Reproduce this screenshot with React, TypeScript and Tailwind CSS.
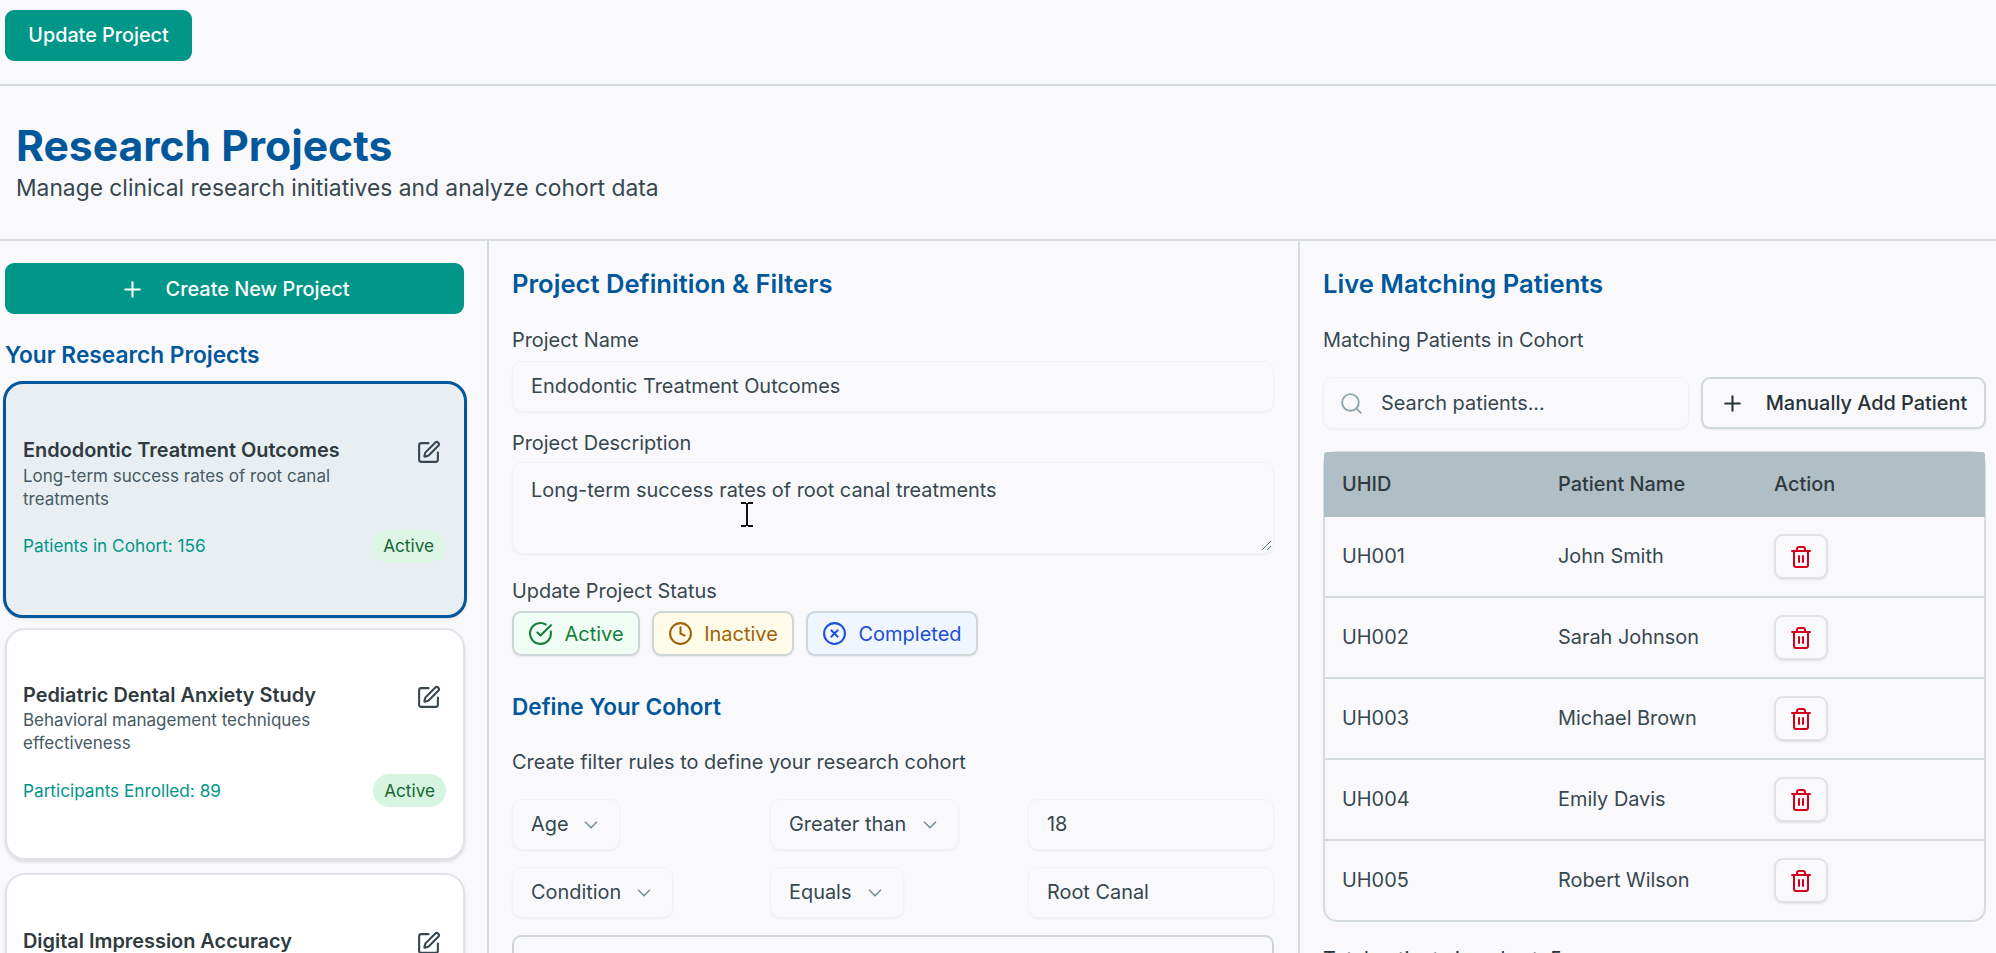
import { Plus, SquarePen, CircleCheckBig, Clock, CircleX, ChevronDown, Search, Trash2 } from "lucide-react";

const font = { fontFamily: "Inter, sans-serif" };

function Card({ active, title, desc, meta, last }: { active?: boolean; title: string; desc: string; meta: string; last?: boolean }) {
  return (
    <div className={active
      ? "rounded-[20px] border-[3px] border-[#01579b] bg-[#e8eff3] pt-[0.5px] pl-[17px] pr-[18px] h-[237px] -mx-[2px] mb-[10px] flex flex-col justify-center shadow-sm"
      : last
        ? "rounded-[20px] border-2 border-[#dfe3e8] bg-white pt-[0.5px] pl-[16px] pr-[17px] h-[258px] flex flex-col justify-center shadow-[0_2px_3px_rgba(0,0,0,0.12)] shrink-0"
        : "rounded-[20px] border-2 border-[#dfe3e8] bg-white pt-[0.5px] pl-[16px] pr-[17px] h-[232px] mb-[13px] flex flex-col justify-center shadow-[0_2px_3px_rgba(0,0,0,0.12)] shrink-0"}>
      <div className="flex justify-between items-start">
        <div className="w-[340px]">
          <div className="text-[19.9px] leading-[26px] font-semibold text-[#2f3a40]">{title}</div>
          <div className="text-[17px] leading-[23px] text-[#455a64] mt-[1.5px]">{desc}</div>
        </div>
        <SquarePen size={25} strokeWidth={2} className="text-[#37474f] mt-[3px] mr-[5px]" />
      </div>
      <div className="flex justify-between items-center mt-[19px]">
        <span className="text-[17.2px] text-[#009688]">{meta}</span>
        <span className={active
          ? "h-[33px] px-[12px] flex items-center rounded-full bg-[#dcf5e5] text-[#166534] text-[17.2px]"
          : "h-[33px] px-[11px] flex items-center rounded-full bg-[#d6f5e0] text-[#166534] text-[17.2px]"}>Active</span>
      </div>
    </div>
  );
}

function Sel({ label, w }: { label: string; w: string }) {
  return (
    <div className={`${w} h-[51px] rounded-[10px] border border-[#f1f2f5] shadow-[0_1px_2px_rgba(0,0,0,0.05)] pl-[18px] pr-[17px] flex items-center justify-between text-[19.9px] text-[#37474f]`}>
      <span>{label}</span>
      <ChevronDown size={22} strokeWidth={1.8} className="text-[#78909c]" />
    </div>
  );
}

function Val({ v }: { v: string }) {
  return (
    <div className="h-[51px] rounded-[10px] border border-[#f1f2f5] shadow-[0_1px_2px_rgba(0,0,0,0.05)] px-[18px] flex items-center text-[19.9px] text-[#37474f]">{v}</div>
  );
}

const patients = [["UH001", "John Smith"], ["UH002", "Sarah Johnson"], ["UH003", "Michael Brown"], ["UH004", "Emily Davis"], ["UH005", "Robert Wilson"]];

export default function App() {
  return (
    <div style={font} className="h-[953px] w-[1996px] overflow-hidden bg-[#f9f9fc] text-[#37474f] relative">
      <div className="h-[86px] pt-[10px] pl-[5px] border-b-2 border-[#d5dce0]">
        <button className="w-[187px] h-[51px] pt-[1px] rounded-[9px] bg-[#009688] text-white text-[19.8px] font-medium">Update Project</button>
      </div>
      <div className="h-[155px] border-b-2 border-[#d5dce0] pl-[16px] pt-[37px]">
        <h1 className="text-[42.6px] leading-[46px] font-bold text-[#01579b]">Research Projects</h1>
        <p className="text-[22.8px] leading-[30px] text-[#37474f] mt-[4px]">Manage clinical research initiatives and analyze cohort data</p>
      </div>
      <div className="flex h-[712px]">
        <div className="w-[489px] shrink-0 border-r-2 border-[#d5dce0] pl-[5px] pr-[22px] pt-[22px] overflow-hidden">
          <button className="w-[459px] h-[51px] pt-[2px] rounded-[9px] bg-[#009688] text-white text-[19.9px] font-medium flex items-center justify-center gap-[21px]">
            <Plus size={25} />Create New Project
          </button>
          <h2 className="text-[22.7px] leading-[30px] font-semibold text-[#01579b] mt-[26px] mb-[11px]">Your Research Projects</h2>
          <Card active title="Endodontic Treatment Outcomes" desc="Long-term success rates of root canal treatments" meta="Patients in Cohort: 156" />
          <Card title="Pediatric Dental Anxiety Study" desc="Behavioral management techniques effectiveness" meta="Participants Enrolled: 89" />
          <Card last title="Digital Impression Accuracy" desc="Comparing digital and analog impression techniques in restorative dentistry outcomes and patient comfort" meta="Participants Enrolled: 42" />
        </div>
        <div className="w-[811px] shrink-0 border-r-2 border-[#d5dce0] pl-[23px] pr-[24px] pt-[26px] overflow-hidden">
          <h2 className="text-[25.6px] leading-[34px] font-semibold text-[#01579b]">Project Definition &amp; Filters</h2>
          <div className="text-[19.9px] leading-[28px] mt-[25px]">Project Name</div>
          <div className="h-[51px] mt-[7px] rounded-[10px] border border-[#f1f2f5] shadow-[0_1px_2px_rgba(0,0,0,0.05)] px-[18px] flex items-center text-[19.9px]">Endodontic Treatment Outcomes</div>
          <div className="text-[19.9px] leading-[28px] mt-[17px]">Project Description</div>
          <div className="h-[92px] mt-[5px] rounded-[10px] border border-[#f1f2f5] shadow-[0_1px_2px_rgba(0,0,0,0.05)] px-[18px] pt-[13px] text-[19.9px] leading-[28px] relative">
            Long-term success rates of root canal treatments
            <svg className="absolute right-[1px] bottom-[2px]" width="11" height="11" viewBox="0 0 11 11" fill="none" stroke="#546e7a"><path d="M1 10L10 1M6 10L10 6" /></svg>
          </div>
          <div className="text-[19.9px] leading-[28px] mt-[23px]">Update Project Status</div>
          <div className="flex gap-[12px] mt-[6px]">
            <div className="h-[45px] w-[128px] rounded-[9px] border-2 border-[#ced6da] bg-[#f0fdf4] text-[#15803d] text-[20px] flex items-center justify-center gap-[11px] shadow-[0_1px_2px_rgba(0,0,0,0.08)]"><CircleCheckBig size={25} />Active</div>
            <div className="h-[45px] w-[142px] rounded-[9px] border-2 border-[#ced6da] bg-[#fefce8] text-[#a16207] text-[20px] flex items-center justify-center gap-[11px] shadow-[0_1px_2px_rgba(0,0,0,0.08)]"><Clock size={25} />Inactive</div>
            <div className="h-[45px] w-[172px] rounded-[9px] border-2 border-[#ced6da] bg-[#eff6ff] text-[#1d4ed8] text-[20px] flex items-center justify-center gap-[11px] shadow-[0_1px_2px_rgba(0,0,0,0.08)]"><CircleX size={25} />Completed</div>
          </div>
          <h2 className="text-[22.6px] leading-[30px] font-semibold text-[#01579b] mt-[36px]">Define Your Cohort</h2>
          <div className="text-[19.9px] leading-[28px] mt-[26px]">Create filter rules to define your research cohort</div>
          <div className="grid grid-cols-3 gap-x-[12px] gap-y-[17px] mt-[23px]">
            <Sel label="Age" w="w-[108px]" /><Sel label="Greater than" w="w-[189px]" /><Val v="18" />
            <Sel label="Condition" w="w-[161px]" /><Sel label="Equals" w="w-[134px]" /><Val v="Root Canal" />
          </div>
          <div className="h-[60px] mt-[17px] rounded-[9px] border-2 border-[#ced6da] flex items-center justify-center gap-[23px] text-[19.9px] font-medium"><Plus size={25} />Add Rule</div>
        </div>
        <div className="flex-1 pl-[23px] pr-[10px] pt-[26px] overflow-hidden">
          <h2 className="text-[25.6px] leading-[34px] font-semibold text-[#01579b]">Live Matching Patients</h2>
          <div className="text-[19.9px] leading-[28px] mt-[25px]">Matching Patients in Cohort</div>
          <div className="flex gap-[12px] mt-[23px]">
            <div className="w-[366px] h-[52px] pt-[1px] rounded-[10px] border border-[#f1f2f5] shadow-[0_1px_2px_rgba(0,0,0,0.05)] pl-[15px] flex items-center gap-[17px] text-[19.9px]"><Search size={25} strokeWidth={1.8} className="text-[#90a4ae]" />Search patients...</div>
            <div className="flex-1 h-[52px] pt-[1px] rounded-[9px] border-2 border-[#ced6da] flex items-center justify-center gap-[21px] text-[19.9px] font-medium text-[#263238] shadow-[0_1px_2px_rgba(0,0,0,0.08)]"><Plus size={25} />Manually Add Patient</div>
          </div>
          <div className="mt-[22px] rounded-[14px] border-2 border-[#d5dce0]">
            <div className="h-[65px] pt-[1px] bg-[#b0bec5] rounded-t-[3px] -mx-[1px] -mt-[1px] pl-[1px] flex items-center text-[19.9px] font-medium text-[#2f3a40]">
              <div className="w-[233px] pl-[17px]">UHID</div><div className="w-[216px]">Patient Name</div><div>Action</div>
            </div>
            {patients.map(([id, name], i) => (
              <div key={id} className={i < 4 ? "h-[81px] border-b-2 border-[#d5dce0] flex items-center text-[19.9px]" : "h-[79px] flex items-center text-[19.9px]"}>
                <div className="w-[233px] pl-[17px] pt-[1px]">{id}</div><div className="w-[216px] pt-[1px]">{name}</div>
                <div className="w-[54px] h-[45px] rounded-[9px] border-2 border-[#dfe3e8] flex items-center justify-center text-[#d0021b] shadow-[0_1px_2px_rgba(0,0,0,0.1)]"><Trash2 size={24} /></div>
              </div>
            ))}
          </div>
          <div className="text-[19.9px] leading-[28px] mt-[23px] text-[#263238]">Total patients in cohort: 5</div>
        </div>
      </div>
      <svg className="absolute left-[740px] top-[502px]" width="14" height="25" viewBox="0 0 14 25" fill="none" stroke="#111" strokeWidth="2"><path d="M1 1H6M8 1H13M7 1V24M1 24H6M8 24H13" /></svg>
    </div>
  );
}
